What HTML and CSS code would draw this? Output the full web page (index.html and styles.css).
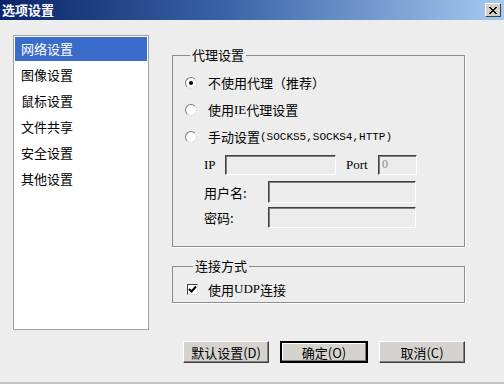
FILE: index.html
```html
<!DOCTYPE html>
<html lang="zh-CN">
<head>
    <meta charset="UTF-8">
    <title>选项设置</title>
    <link rel="stylesheet" href="styles.css">
</head>
<body>
    <div class="window">
        <div class="titlebar">
            <span class="title">选项设置</span>
            <span class="close">
                <svg width="8" height="7" viewBox="0 0 8 7"><path d="M0 0L7 7M1 0L8 7M7 0L0 7M8 0L1 7" stroke="#000" stroke-width="1"/></svg>
            </span>
        </div>

        <div class="main">
            <ul class="list">
                <li class="selected">网络设置</li>
                <li>图像设置</li>
                <li>鼠标设置</li>
                <li>文件共享</li>
                <li>安全设置</li>
                <li>其他设置</li>
            </ul>

            <div class="panel">
                <fieldset class="group proxy">
                    <legend>代理设置</legend>
                    <div class="option"><span class="radio checked"></span>不使用代理（推荐）</div>
                    <div class="option"><span class="radio"></span>使用<span class="latin">IE</span>代理设置</div>
                    <div class="option"><span class="radio"></span>手动设置<span class="mono">(SOCKS5,SOCKS4,HTTP)</span></div>

                    <div class="field ip-row">
                        <span class="label latin ip-label">IP</span>
                        <span class="input ip-input"></span>
                        <span class="label latin port-label">Port</span>
                        <span class="input port-input">0</span>
                    </div>
                    <div class="field user-row">
                        <span class="label name-label">用户名:</span>
                        <span class="input wide-input"></span>
                    </div>
                    <div class="field pass-row">
                        <span class="label name-label">密码:</span>
                        <span class="input wide-input"></span>
                    </div>
                </fieldset>

                <fieldset class="group connect">
                    <legend>连接方式</legend>
                    <div class="option check-row">
                        <span class="checkbox">
                            <svg width="9" height="9" viewBox="0 0 9 9"><path d="M1 4L3.5 6.5L8 1.5" fill="none" stroke="#000" stroke-width="2"/></svg>
                        </span>使用<span class="latin">UDP</span>连接
                    </div>
                </fieldset>

                <div class="buttons">
                    <button class="btn">默认设置(D)</button>
                    <button class="btn default">确定(O)</button>
                    <button class="btn">取消(C)</button>
                </div>
            </div>
        </div>
    </div>
</body>
</html>
```

FILE: styles.css
```css
body {
    margin: 0;
    padding: 0;
    font-family: "Noto Sans CJK SC", sans-serif;
    font-size: 13px;
    color: #000;
    background: #ededed;
}
.window {
    width: 504px;
    height: 384px;
    box-sizing: border-box;
    background: #ededed;
    border-bottom: 2px solid #c4c4c4;
    overflow: hidden;
}
.titlebar {
    height: 20px;
    display: flex;
    align-items: center;
    justify-content: space-between;
    padding: 0 3px 0 2px;
    background: linear-gradient(90deg, #0a246a 0%, #3a64a8 45%, #a6caf0 100%);
}
.title {
    color: #fff;
    font-weight: bold;
    font-size: 13px;
    line-height: 20px;
}
.close {
    width: 14px;
    height: 12px;
    display: flex;
    align-items: center;
    justify-content: center;
    background: #d4d0c8;
    border: 1px solid;
    border-color: #fff #404040 #404040 #fff;
}
.main {
    display: flex;
    align-items: flex-start;
}
.list {
    list-style: none;
    margin: 15px 0 0 13px;
    padding: 1px;
    width: 132px;
    height: 291px;
    background: #fff;
    border: 1px solid #a0a0a0;
}
.list li {
    height: 26px;
    line-height: 24px;
    padding-left: 6px;
}
.list li.selected {
    height: 24px;
    margin-bottom: 2px;
    background: #3a6ccc;
    color: #fff;
}
.panel {
    margin-left: 23px;
    width: 293px;
}
.group {
    margin: 0;
    padding: 0 0 0 11px;
    border: 1px solid #8c8c8c;
    box-shadow: 1px 1px 0 #fff;
}
.group legend {
    padding: 0 2px;
    margin-left: 6px;
    line-height: 16px;
}
.proxy {
    margin-top: 27px;
    height: 200px;
    box-sizing: border-box;
    padding-top: 6px;
}
.connect {
    margin-top: 11px;
    height: 45px;
    box-sizing: border-box;
    padding-left: 14px;
}
.option {
    height: 27px;
    display: flex;
    align-items: center;
}
.latin {
    font-family: "Liberation Serif", serif;
}
.mono {
    font-family: "Liberation Mono", monospace;
    font-size: 11px;
}
.radio {
    width: 10px;
    height: 10px;
    margin: 0 11px 0 1px;
    border-radius: 50%;
    border: 1px solid #7a7a7a;
    border-right-color: #e0e0e0;
    border-bottom-color: #e0e0e0;
    background: #fff;
    position: relative;
}
.radio.checked::after {
    content: "";
    position: absolute;
    left: 3px;
    top: 3px;
    width: 4px;
    height: 4px;
    border-radius: 50%;
    background: #000;
}
.field {
    display: flex;
    align-items: center;
    padding-left: 20px;
}
.ip-row {
    margin-top: 5px;
    height: 20px;
}
.user-row {
    margin-top: 6px;
    height: 22px;
}
.pass-row {
    margin-top: 4px;
    height: 21px;
}
.label {
    white-space: nowrap;
}
.ip-label {
    width: 21px;
}
.port-label {
    width: 32px;
    margin-left: 10px;
}
.name-label {
    width: 64px;
}
.input {
    box-sizing: border-box;
    height: 100%;
    background: #ececec;
    border: 1px solid;
    border-color: #404040 #fff #fff #404040;
    box-shadow: inset 1px 1px 0 #808080;
    color: #8a8a8a;
    font-family: "Liberation Serif", serif;
    font-size: 12px;
    line-height: 16px;
    padding-left: 3px;
}
.ip-input {
    width: 111px;
}
.port-input {
    width: 39px;
}
.wide-input {
    width: 148px;
}
.check-row {
    height: 18px;
    margin-top: 6px;
}
.checkbox {
    width: 9px;
    height: 9px;
    margin-right: 10px;
    display: flex;
    align-items: center;
    justify-content: center;
    background: #fff;
    border: 1px solid;
    border-color: #404040 #e0e0e0 #e0e0e0 #404040;
}
.buttons {
    display: flex;
    gap: 11px;
    margin: 38px 0 0 11px;
}
.btn {
    height: 22px;
    padding: 0;
    font-family: "Noto Sans CJK SC", sans-serif;
    font-size: 13px;
    background: #d6d3ce;
    border: 1px solid;
    border-color: #fff #404040 #404040 #fff;
    box-shadow: inset -1px -1px 0 #808080;
    width: 88px;
}
.btn.default {
    width: 90px;
    border: 2px solid #000;
    box-shadow: inset -1px -1px 0 #808080, inset 1px 1px 0 #fff;
}
```
